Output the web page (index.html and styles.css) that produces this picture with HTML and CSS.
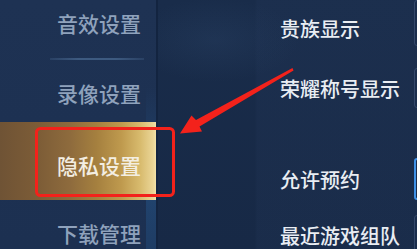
FILE: index.html
```html
<!DOCTYPE html>
<html lang="zh-CN">
<head>
<meta charset="utf-8">
<title>设置</title>
<link rel="stylesheet" href="styles.css">
</head>
<body>
<div class="screen">
  <nav class="sidebar">
    <div class="nav-item nav-first">音效设置</div>
    <div class="nav-sep"></div>
    <div class="nav-item nav-second">录像设置</div>
    <div class="nav-item nav-active">隐私设置</div>
    <div class="nav-item nav-last">下载管理</div>
  </nav>
  <main class="content">
    <div class="row row-1"><span class="label">贵族显示</span><span class="toggle"></span></div>
    <div class="row row-2"><span class="label">荣耀称号显示</span><span class="toggle"></span></div>
    <div class="row row-3"><span class="label">允许预约</span><span class="toggle toggle-on"></span></div>
    <div class="row row-4"><span class="label">最近游戏组队</span><span class="toggle"></span></div>
  </main>
  <svg class="annotation" width="417" height="249" viewBox="0 0 417 249">
    <rect x="36.5" y="128.5" width="137" height="67" rx="4" ry="4" fill="none" stroke="#f3221b" stroke-width="3"/>
    <polygon points="292.5,68 293.5,70.5 199.5,126.5 202,131.5 180,133.5 191.5,115.5 196,120" fill="#f3221b"/>
  </svg>
</div>
</body>
</html>
```
FILE: styles.css
```css
* { box-sizing: border-box; }
html, body { margin: 0; padding: 0; }
body {
  width: 417px;
  height: 249px;
  overflow: hidden;
  background: #172a47;
  font-family: "Noto Sans CJK SC", "Noto Sans", sans-serif;
}
.screen {
  position: relative;
  display: flex;
  width: 417px;
  height: 249px;
  overflow: hidden;
  background:
    radial-gradient(ellipse 120px 60px at 215px 40px, rgba(60, 90, 130, 0.18), transparent 70%),
    linear-gradient(180deg, #192c4a 0%, #172946 100%);
}
.sidebar {
  flex: 0 0 158px;
  display: flex;
  flex-direction: column;
  background:
    linear-gradient(180deg, rgba(36, 80, 130, 0) 35%, rgba(36, 84, 136, 0.55) 75%, rgba(36, 84, 136, 0.35) 100%) right / 10px 100% no-repeat,
    linear-gradient(180deg, #1e3253 0%, #1c3051 100%);
  border-right: 2px solid #132440;
}
.nav-item {
  display: flex;
  align-items: center;
  flex-shrink: 0;
  padding-left: 57px;
  font-size: 21px;
  font-weight: 500;
  color: #8fa2bc;
  white-space: nowrap;
}
.nav-first { height: 46px; }
.nav-sep {
  flex: 0 0 2px;
  margin: 12px 12px 0 50px;
  background: linear-gradient(90deg, rgba(70, 100, 140, 0.3), #3d5a80 30%, #3d5a80 70%, rgba(70, 100, 140, 0.3));
}
.nav-second { height: 62px; padding-top: 4px; }
.nav-active {
  height: 78px;
  padding-top: 8px;
  color: #f3eee2;
  background: linear-gradient(90deg, #6f5335 0%, #7d5d37 25%, #8e6b3d 45%, #a5803f 62%, #bf9a4e 78%, #d8bb6e 90%, #ead596 98%, #f2e2a8 100%);
}
.nav-last { height: 66px; }

.content {
  flex: 1 1 auto;
  display: flex;
  flex-direction: column;
  padding-left: 122px;
  background: linear-gradient(90deg, rgba(0, 0, 0, 0) 0, rgba(0, 0, 0, 0) 97px, rgba(40, 60, 95, 0.18) 99px);
}
.row {
  display: flex;
  align-items: center;
  flex-shrink: 0;
  white-space: nowrap;
}
.label {
  flex: 0 0 134px;
  font-size: 20px;
  font-weight: 500;
  color: #e9edf3;
}
.toggle {
  flex: 0 0 60px;
  height: 40px;
  border: 1px solid #34486a;
  border-radius: 3px;
  background: #1a2d4c;
}
.toggle-on {
  border: 2px solid #3f91e6;
  height: 42px;
}
.row-1 { height: 56px; }
.row-1 .toggle { height: 46px; margin-top: -10px; }
.row-2 { height: 64px; }
.row-3 { height: 54px; margin-top: 32px; }
.row-4 { height: 58px; margin-top: 0; }

.annotation {
  position: absolute;
  left: 0;
  top: 0;
  pointer-events: none;
}
```
